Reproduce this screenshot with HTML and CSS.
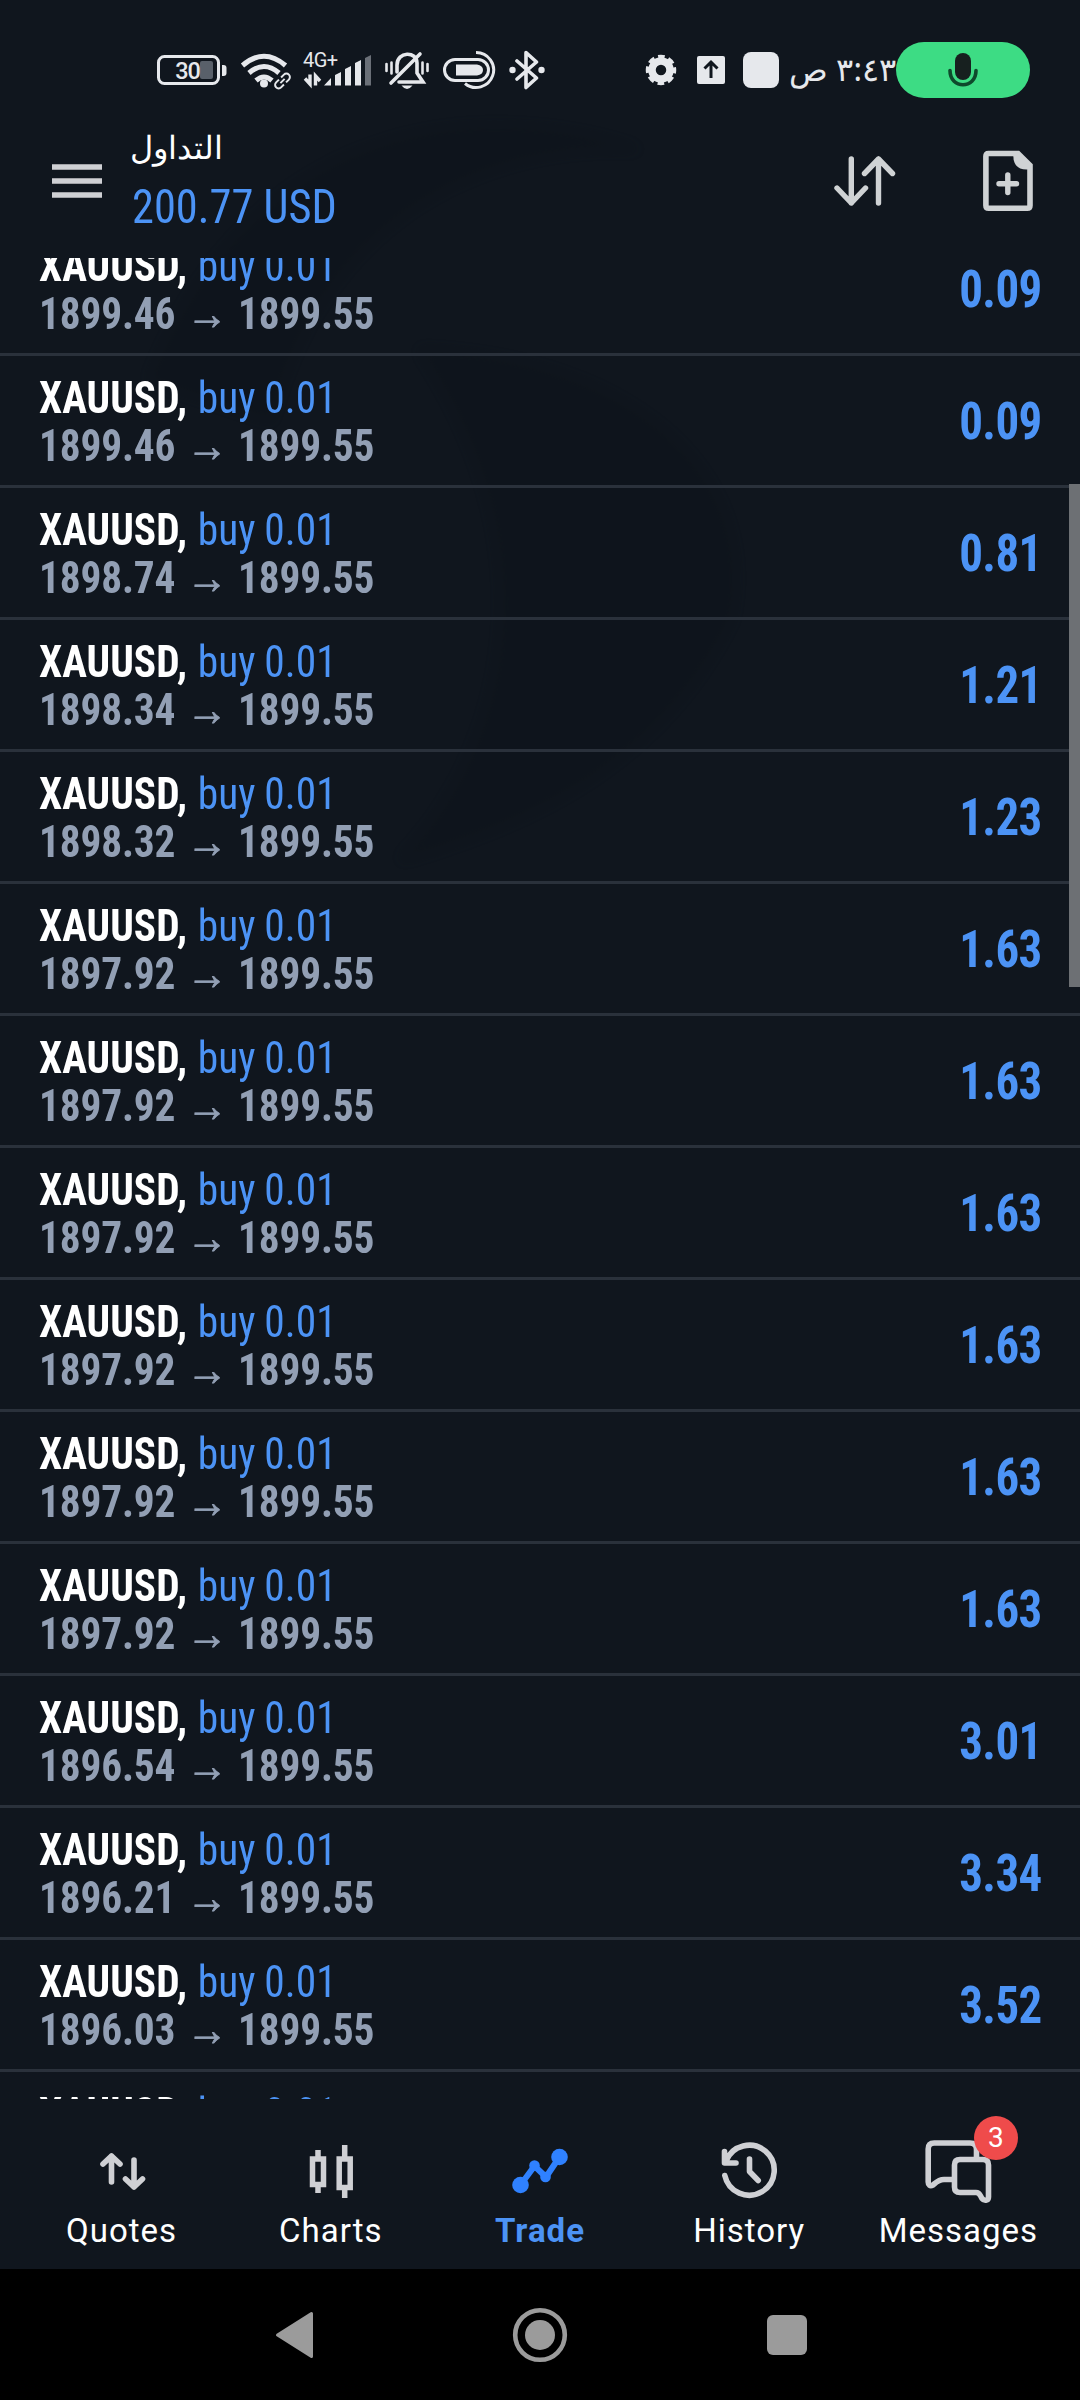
FILE: index.html
```
<!DOCTYPE html>
<html lang="en">
<head>
    <meta charset="UTF-8">
    <meta name="viewport" content="width=device-width, initial-scale=1.0">
    <title>Trade</title>
    <link rel="stylesheet" href="styles.css">
</head>
<body>
    <div class="screen">
        <svg class="watermark" viewBox="0 0 1080 900" aria-hidden="true">
            <path d="M150 380 C230 170 420 80 640 150 C520 140 330 190 270 420 Z"/>
            <path d="M420 350 C640 360 760 480 730 620 C650 780 500 830 400 860 C500 760 560 560 420 350 Z"/>
        </svg>

        <div class="status-bar">
            <svg class="battery" viewBox="156 50 72 40">
                <rect x="158.5" y="56.5" width="60" height="27" rx="6" fill="none" stroke="#e6e8ec" stroke-width="3"/>
                <rect x="200" y="61" width="13" height="18" rx="2" fill="#59606a"/>
                <path d="M222 65h1.5a3 3 0 0 1 3 3v5a3 3 0 0 1-3 3H222z" fill="#e6e8ec"/>
                <text x="187.500" y="79" text-anchor="middle" class="battery-text">30</text>
            </svg>
            <svg class="wifi" viewBox="240 50 52 40">
                <g fill="none" stroke="#e6e8ec" stroke-width="5">
                    <path d="M242.500 65.500Q264 47 285.500 65.500"/>
                    <path d="M249 73Q264 60 279 73"/>
                    <path d="M256 80.500Q264 73.500 272 80.500"/>
                </g>
                <circle cx="264" cy="83.500" r="4" fill="#e6e8ec"/>
                <g transform="rotate(-45 282.500 81)" fill="none" stroke="#10161e" stroke-width="6">
                    <rect x="274" y="77.500" width="17" height="7" rx="3.500"/>
                </g>
                <g transform="rotate(-45 282.500 81)" fill="none" stroke="#e6e8ec" stroke-width="2">
                    <path d="M281 77.500h-4a3.500 3.500 0 0 0 0 7h4M284 77.500h4a3.500 3.500 0 0 1 0 7h-4M279.500 81h6"/>
                </g>
            </svg>
            <svg class="signal" viewBox="302 50 70 40">
                <text x="303" y="66.500" class="network-text">4G+</text>
                <path d="M305 78.500l5 5.500V74.500M315.500 85.500V76l4.500 5" fill="none" stroke="#e6e8ec" stroke-width="3.400"/>
                <path d="M324 85.500l7-7.500v7.500zM335 85.500V75l6-3v13.500zM345 85.500V69l6-3v19.500zM355 85.500V63l6-3v25.500z" fill="#e6e8ec"/>
                <path d="M365 85.500V58l6-3v30.500z" fill="#6a6f77"/>
            </svg>
            <svg class="bell" viewBox="384 50 46 40">
                <g fill="none" stroke="#e6e8ec" stroke-width="3.600" stroke-linecap="round">
                    <path d="M397 72v-7c0-14 20-14 20-2v10l6 9h-24"/>
                    <path d="M391 83l29-29"/>
                    <path d="M386.500 64v7M391.500 62.500v11M422.500 62.500v11M427.500 64v7" stroke-width="2.600"/>
                </g>
                <path d="M401.500 85.500h11q-5.500 7-11 0z" fill="#e6e8ec"/>
            </svg>
            <svg class="toggle" viewBox="442 50 56 40">
                <g fill="none" stroke="#e6e8ec" stroke-width="3">
                    <rect x="444.500" y="59.500" width="44" height="21" rx="10.500"/>
                    <path d="M476 52.500a17.500 17.500 0 1 1-11 31"/>
                </g>
                <path d="M456 64.500h21q6 1 6 5.500t-6 5.500h-21z" fill="#e6e8ec"/>
            </svg>
            <svg class="bluetooth" viewBox="508 50 38 40">
                <path d="M517 61l19.500 17-10.500 9.500V52.500L536.500 62 517 79" fill="none" stroke="#e6e8ec" stroke-width="3.600" stroke-linejoin="round" stroke-linecap="round"/>
                <circle cx="512.500" cy="70" r="3.200" fill="#e6e8ec"/>
                <circle cx="541.500" cy="70" r="3.200" fill="#e6e8ec"/>
            </svg>

            <svg class="gear" viewBox="645 54 32 32">
                <circle cx="661" cy="70" r="9" fill="none" stroke="#e6e8ec" stroke-width="7.500"/>
                <circle cx="661" cy="70" r="13.500" fill="none" stroke="#e6e8ec" stroke-width="3.500" stroke-dasharray="6.600 4" stroke-dashoffset="3.300"/>
            </svg>
            <svg class="upload" viewBox="697 56 28 28">
                <rect x="697" y="56" width="28" height="28" rx="2" fill="#e6e8ec"/>
                <path d="M711 78V63M704.500 68.500l6.500-6.500 6.500 6.500" fill="none" stroke="#10161e" stroke-width="3"/>
            </svg>
            <div class="square"></div>
            <div class="clock" dir="rtl">٣:٤٣ ص</div>
            <div class="mic-pill">
                <svg class="mic" viewBox="947 50 32 40">
                    <rect x="955" y="53" width="16" height="27" rx="8" fill="#17201f"/>
                    <path d="M950 70.500c0 19 26 19 26 0" fill="none" stroke="#0e4a2c" stroke-width="3.600" stroke-linecap="round"/>
                </svg>
            </div>
        </div>

        <header class="header">
            <svg class="menu" viewBox="0 0 50 34">
                <path d="M0 3h50M0 17h50M0 31h50" stroke="#cfd0d4" stroke-width="5.600"/>
            </svg>
            <div class="title-box">
                <div class="title" dir="rtl">التداول</div>
                <div class="balance">200.77 USD</div>
            </div>
            <svg class="sort" viewBox="834 155 62 52">
                <path d="M851.300 159v44M837 188l14.300 15 14.200-15M878.500 203v-44M864.500 173.500l14-14.500 14 14.500" fill="none" stroke="#cfd2d4" stroke-width="5.400" stroke-linecap="round" stroke-linejoin="round"/>
            </svg>
            <svg class="new-order" viewBox="983 150 50 62">
                <path d="M988.500 153.500h29.500l12 12v40q0 2.800-2.800 2.800h-38.500q-2.800 0-2.800-2.800v-49.200q0-2.800 2.600-2.800z" fill="none" stroke="#cfd2d4" stroke-width="5.600"/>
                <path d="M1013.500 154c-1 10 4 16 14 15.500l4-4-13-13z" fill="#cfd2d4"/>
                <path d="M1007.800 175v17.500M999 183.700h17.500" stroke="#cfd2d4" stroke-width="5.400" stroke-linecap="round"/>
            </svg>
        </header>

        <main class="positions">
            <div class="row">
                <div class="deal">
                    <div class="symbol">XAUUSD, <span class="side">buy 0.01</span></div>
                    <div class="price">1899.46 <span class="arrow">→</span> 1899.55</div>
                </div>
                <div class="profit">0.09</div>
            </div>
            <div class="row">
                <div class="deal">
                    <div class="symbol">XAUUSD, <span class="side">buy 0.01</span></div>
                    <div class="price">1899.46 <span class="arrow">→</span> 1899.55</div>
                </div>
                <div class="profit">0.09</div>
            </div>
            <div class="row">
                <div class="deal">
                    <div class="symbol">XAUUSD, <span class="side">buy 0.01</span></div>
                    <div class="price">1898.74 <span class="arrow">→</span> 1899.55</div>
                </div>
                <div class="profit">0.81</div>
            </div>
            <div class="row">
                <div class="deal">
                    <div class="symbol">XAUUSD, <span class="side">buy 0.01</span></div>
                    <div class="price">1898.34 <span class="arrow">→</span> 1899.55</div>
                </div>
                <div class="profit">1.21</div>
            </div>
            <div class="row">
                <div class="deal">
                    <div class="symbol">XAUUSD, <span class="side">buy 0.01</span></div>
                    <div class="price">1898.32 <span class="arrow">→</span> 1899.55</div>
                </div>
                <div class="profit">1.23</div>
            </div>
            <div class="row">
                <div class="deal">
                    <div class="symbol">XAUUSD, <span class="side">buy 0.01</span></div>
                    <div class="price">1897.92 <span class="arrow">→</span> 1899.55</div>
                </div>
                <div class="profit">1.63</div>
            </div>
            <div class="row">
                <div class="deal">
                    <div class="symbol">XAUUSD, <span class="side">buy 0.01</span></div>
                    <div class="price">1897.92 <span class="arrow">→</span> 1899.55</div>
                </div>
                <div class="profit">1.63</div>
            </div>
            <div class="row">
                <div class="deal">
                    <div class="symbol">XAUUSD, <span class="side">buy 0.01</span></div>
                    <div class="price">1897.92 <span class="arrow">→</span> 1899.55</div>
                </div>
                <div class="profit">1.63</div>
            </div>
            <div class="row">
                <div class="deal">
                    <div class="symbol">XAUUSD, <span class="side">buy 0.01</span></div>
                    <div class="price">1897.92 <span class="arrow">→</span> 1899.55</div>
                </div>
                <div class="profit">1.63</div>
            </div>
            <div class="row">
                <div class="deal">
                    <div class="symbol">XAUUSD, <span class="side">buy 0.01</span></div>
                    <div class="price">1897.92 <span class="arrow">→</span> 1899.55</div>
                </div>
                <div class="profit">1.63</div>
            </div>
            <div class="row">
                <div class="deal">
                    <div class="symbol">XAUUSD, <span class="side">buy 0.01</span></div>
                    <div class="price">1897.92 <span class="arrow">→</span> 1899.55</div>
                </div>
                <div class="profit">1.63</div>
            </div>
            <div class="row">
                <div class="deal">
                    <div class="symbol">XAUUSD, <span class="side">buy 0.01</span></div>
                    <div class="price">1896.54 <span class="arrow">→</span> 1899.55</div>
                </div>
                <div class="profit">3.01</div>
            </div>
            <div class="row">
                <div class="deal">
                    <div class="symbol">XAUUSD, <span class="side">buy 0.01</span></div>
                    <div class="price">1896.21 <span class="arrow">→</span> 1899.55</div>
                </div>
                <div class="profit">3.34</div>
            </div>
            <div class="row">
                <div class="deal">
                    <div class="symbol">XAUUSD, <span class="side">buy 0.01</span></div>
                    <div class="price">1896.03 <span class="arrow">→</span> 1899.55</div>
                </div>
                <div class="profit">3.52</div>
            </div>
            <div class="row">
                <div class="deal">
                    <div class="symbol">XAUUSD, <span class="side">buy 0.01</span></div>
                </div>
            </div>
            <div class="scrollbar"></div>
        </main>

        <nav class="tabs">
            <div class="tab">
                <svg viewBox="81.500 2135 80 75">
                    <path d="M111 2182v-26M102.500 2164l8.500-8 8.500 8M133.500 2160v27M125 2179l8.500 8 8.500-8" class="line"/>
                </svg>
                <span>Quotes</span>
            </div>
            <div class="tab">
                <svg viewBox="290.500 2135 80 75">
                    <path d="M312 2159h11v25.500h-11zM317.500 2150v8M317.500 2185v8M338.700 2159h11v28.500h-11zM344.200 2145v13M344.200 2188v10" fill="none" stroke="#cfd0d4" stroke-width="5.500"/>
                </svg>
                <span>Charts</span>
            </div>
            <div class="tab active">
                <svg viewBox="500 2135 80 75">
                    <path d="M520.500 2185l14-19 11.500 11 13.500-20" fill="none" stroke="#2f81ff" stroke-width="6"/>
                    <circle cx="520.500" cy="2185" r="8.300" fill="#2f81ff"/>
                    <circle cx="534.500" cy="2165.500" r="5.300" fill="#2f81ff"/>
                    <circle cx="545.500" cy="2177" r="5.300" fill="#2f81ff"/>
                    <circle cx="559.500" cy="2157" r="8.300" fill="#2f81ff"/>
                </svg>
                <span>Trade</span>
            </div>
            <div class="tab">
                <svg viewBox="708.500 2135 80 75">
                    <path d="M724.300 2175.500A25 25 0 1 0 725.500 2161M724 2151.500v11.500h11.500M749 2159v12.500l8.700 9" class="line"/>
                </svg>
                <span>History</span>
            </div>
            <div class="tab">
                <svg viewBox="918 2135 80 75">
                    <path d="M952 2179.500h-8c-6 0-9 4-11 5.500-3 1.500-4.800 0-4.800-3v-33q0-6 6-6H970q6.500 0 6.500 6.500v8" class="line"/>
                    <path d="M960 2159.500h23q5.500 0 5.500 5.500v32c0 4-4.500 4-6.500 1.500-2-3-2-6-6-6h-16q-5.500 0-5.500-5.500v-22q0-5.500 5.500-5.500z" class="line"/>
                </svg>
                <span>Messages</span>
                <b class="badge">3</b>
            </div>
        </nav>

        <div class="system-nav">
            <svg viewBox="270 2305 50 60"><path d="M277.500 2335l34-21.500v43z" fill="#9b9b9b" stroke="#9b9b9b" stroke-width="3" stroke-linejoin="round"/></svg>
            <svg viewBox="510 2305 60 60">
                <circle cx="540" cy="2335" r="24.800" fill="none" stroke="#9b9b9b" stroke-width="4.600"/>
                <circle cx="540" cy="2335" r="15" fill="#9b9b9b"/>
            </svg>
            <svg viewBox="762 2305 50 60"><rect x="767" y="2315" width="40" height="40" rx="6" fill="#9b9b9b"/></svg>
        </div>
    </div>
</body>
</html>
```
FILE: styles.css
```
body {
    margin: 0;
    padding: 0;
    background-color: #10161e;
    color: #fff;
    font-family: Roboto, "Noto Sans", sans-serif;
}
svg {
    display: block;
    flex: none;
}
.screen {
    position: relative;
    display: flex;
    flex-direction: column;
    width: 1080px;
    height: 2400px;
    overflow: hidden;
}
.watermark {
    position: absolute;
    left: 0;
    top: 0;
    width: 1080px;
    height: 900px;
    fill: #0c1219;
    opacity: 0.35;
    filter: blur(6px);
}

/* status bar */
.status-bar {
    position: relative;
    display: flex;
    align-items: center;
    height: 140px;
    box-sizing: border-box;
    padding-left: 156px;
}
.battery { width: 72px; height: 40px; margin-right: 12px; }
.wifi { width: 52px; height: 40px; margin-right: 10px; }
.signal { width: 70px; height: 40px; margin-right: 12px; }
.bell { width: 46px; height: 40px; margin-right: 12px; }
.toggle { width: 56px; height: 40px; margin-right: 10px; }
.bluetooth { width: 38px; height: 40px; margin-right: 99px; }
.gear { width: 32px; height: 32px; margin-right: 20px; }
.upload { width: 28px; height: 28px; margin-right: 18px; }
.battery-text {
    font-size: 23.5px;
    font-weight: 500;
    letter-spacing: -1px;
    fill: #e6e8ec;
}
.network-text {
    font-size: 20px;
    letter-spacing: -0.5px;
    fill: #e6e8ec;
}
.square {
    width: 36px;
    height: 36px;
    border-radius: 8px;
    background: #e6e8ec;
}
.clock {
    width: 117px;
    margin-top: -3px;
    font-family: "Noto Sans", sans-serif;
    font-size: 32px;
    line-height: 40px;
    white-space: nowrap;
    color: #e6e8ec;
}
.mic-pill {
    display: flex;
    align-items: center;
    justify-content: center;
    width: 134px;
    height: 56px;
    border-radius: 28px;
    background: #3ddc84;
}
.mic { width: 32px; height: 40px; }

/* header */
.header {
    position: relative;
    display: flex;
    height: 118px;
}
.menu { width: 50px; height: 34px; margin: 24px 30px 0 52px; }
.title-box {
    width: 702px;
    margin-top: -15px;
}
.title {
    width: 91px;
    font-family: "Noto Sans", sans-serif;
    font-size: 31.5px;
    line-height: 44px;
    white-space: nowrap;
}
.balance {
    margin-top: 10px;
    font-family: "Roboto Condensed", Roboto, sans-serif;
    font-size: 48px;
    line-height: 56px;
    color: #4c93f5;
    transform: scaleX(0.925);
    transform-origin: left;
}
.sort { width: 62px; height: 52px; margin-top: 15px; }
.new-order { width: 50px; height: 62px; margin: 10px 0 0 87px; }

/* open positions */
.positions {
    position: relative;
    height: 1841px;
    overflow: hidden;
    font-family: "Roboto Condensed", Roboto, sans-serif;
    font-size: 45px;
    font-weight: 700;
    line-height: 48px;
}
.row {
    display: flex;
    justify-content: space-between;
    height: 132px;
    box-sizing: border-box;
    padding: 18px 38px 0 39px;
    border-bottom: 3px solid #2a313b;
}
.row:first-child {
    margin-top: -34px;
}
.deal {
    transform: scaleX(0.92);
    transform-origin: left;
}
.side {
    margin-left: 1px;
    font-weight: 400;
    letter-spacing: 0.1px;
    word-spacing: -1px;
    color: #4c93f5;
}
.price {
    letter-spacing: -0.2px;
    color: #929fb4;
}
.arrow {
    margin: 0 1px 0 2px;
    font-family: Roboto, sans-serif;
    -webkit-text-stroke: 0.8px #929fb4;
}
.profit {
    margin-top: 24px;
    font-size: 51px;
    letter-spacing: -0.6px;
    color: #4c93f5;
    transform: scaleX(0.92);
    transform-origin: right;
}
.scrollbar {
    position: absolute;
    top: 226px;
    right: 0;
    width: 11px;
    height: 503px;
    background: #6d7074;
}

/* bottom tabs */
.tabs {
    display: flex;
    height: 170px;
    padding: 0 17px;
}
.tab {
    position: relative;
    display: flex;
    flex: 1;
    flex-direction: column;
    align-items: center;
    padding-top: 36px;
    font-size: 33px;
    line-height: 42px;
    letter-spacing: 1px;
}
.tab svg {
    width: 80px;
    height: 75px;
}
.line {
    fill: none;
    stroke: #cfd0d4;
    stroke-width: 5.6px;
    stroke-linecap: round;
    stroke-linejoin: round;
}
.active {
    color: #4c93f5;
    font-weight: 700;
}
.badge {
    position: absolute;
    top: 17px;
    left: 120px;
    width: 44px;
    height: 44px;
    border-radius: 50%;
    background: #ef4b4b;
    font-size: 28px;
    font-weight: 400;
    line-height: 44px;
    letter-spacing: 0;
    text-align: center;
}

/* android navigation */
.system-nav {
    display: flex;
    flex: 1;
    align-items: center;
    padding-left: 270px;
    background: #000;
}
.system-nav svg { width: 50px; height: 60px; }
.system-nav svg:nth-child(2) { width: 60px; margin: 0 192px 0 190px; }
```
